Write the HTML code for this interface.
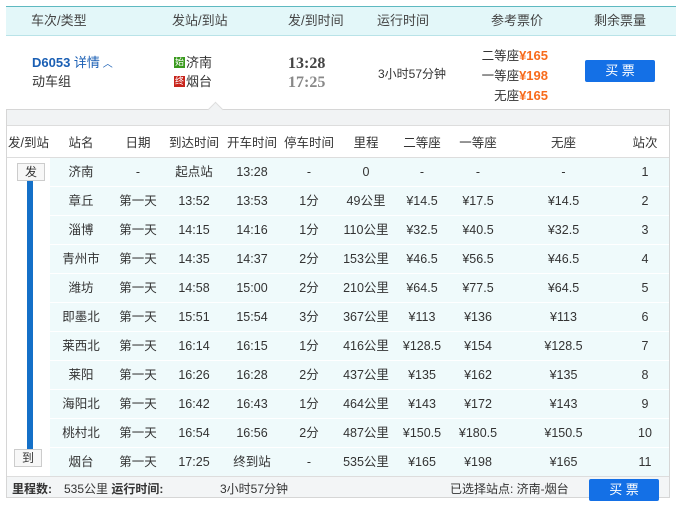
<!DOCTYPE html><html><head><meta charset="utf-8"><style>
*{margin:0;padding:0;box-sizing:border-box}
body{width:676px;height:511px;background:#fff;font-family:"Liberation Sans","Noto Sans CJK SC",sans-serif;font-size:12px;color:#333;position:relative;overflow:hidden}
.a{position:absolute;line-height:16px}
.hd{left:6px;top:6px;width:670px;height:30px;background:#e3f7f9;border-top:1px solid #5fb9c1;border-bottom:1px solid #b9e3e8}
.hd span{position:absolute;top:6px;font-size:13px;color:#444}
.panel{left:6px;top:109px;width:664px;height:389px;border:1px solid #d6d6d6;background:#fff}
.gb{left:7px;top:110px;width:662px;height:16px;background:#f1f3f4;border-bottom:1px solid #ddd}
table{position:absolute;left:7px;top:127px;width:662px;border-collapse:collapse;table-layout:fixed}
td{height:29px;text-align:center;font-size:12.5px;line-height:14px;color:#333;border-top:1px solid #fff;padding:0;vertical-align:middle;white-space:nowrap}
tr.h td{height:30px;background:#fff;border-bottom:1px solid #ddd}
tr.r td{background:#effafb}
tr.r td.f{background:#fff}
.ft{left:7px;top:476px;width:662px;height:21px;background:#f3f5f6;border-top:1px solid #ddd}
.btn{background:#1470e6;color:#fff;border-radius:2px;text-align:center;font-size:13px}
.o{color:#f76b1c;font-weight:bold;font-size:13px}
.tag{width:28px;height:18px;border:1px solid #ccc;background:#f7f7f7;font-size:12px;text-align:center;line-height:16px}
</style></head><body>
<div class="a hd"><span style="left:25px">车次/类型</span><span style="left:166px">发站/到站</span><span style="left:282px">发/到时间</span><span style="left:371px">运行时间</span><span style="left:485px">参考票价</span><span style="left:588px">剩余票量</span></div>
<div class="a" style="left:32px;top:55px;font-weight:bold;color:#1a5fb4;font-size:13px">D6053 <span style="font-weight:normal">详情</span><span style="font-size:10px;font-weight:normal"> ︿</span></div>
<div class="a" style="left:32px;top:74px;font-size:13px">动车组</div>
<div class="a" style="left:174px;top:57px;width:11px;height:11px;background:#3a9a1e;color:#fff;font-size:9px;line-height:11px;text-align:center">始</div>
<div class="a" style="left:186px;top:55px;font-size:13px">济南</div>
<div class="a" style="left:174px;top:76px;width:11px;height:11px;background:#c8241c;color:#fff;font-size:9px;line-height:11px;text-align:center">终</div>
<div class="a" style="left:186px;top:74px;font-size:13px">烟台</div>
<div class="a" style="left:288px;top:55px;font-weight:bold;font-size:16px;color:#444;line-height:18px;font-family:'Liberation Serif',serif">13:28</div>
<div class="a" style="left:288px;top:74px;font-weight:bold;font-size:16px;color:#888;line-height:18px;font-family:'Liberation Serif',serif">17:25</div>
<div class="a" style="left:378px;top:66px;font-size:12px">3小时57分钟</div>
<div class="a" style="left:470px;top:46px;width:78px;text-align:right;line-height:19px;font-size:12.5px">二等座<span class="o">¥165</span><br>一等座<span class="o">¥198</span><br>无座<span class="o">¥165</span></div>
<div class="a btn" style="left:585px;top:60px;width:70px;height:22px;line-height:22px">买 票</div>
<div class="a panel"></div>
<div class="a gb"></div>
<div class="a" style="left:210px;top:104px;width:11px;height:11px;background:#f1f3f4;border-left:1px solid #ddd;border-top:1px solid #ddd;transform:rotate(45deg)"></div>
<table>
<tr class="h"><td style="width:43px">发/到站</td><td style="width:62px">站名</td><td style="width:52px">日期</td><td style="width:60px">到达时间</td><td style="width:56px">开车时间</td><td style="width:58px">停车时间</td><td style="width:56px">里程</td><td style="width:56px">二等座</td><td style="width:56px">一等座</td><td style="width:115px">无座</td><td>站次</td></tr>
<tr class="r"><td class="f"></td><td>济南</td><td>-</td><td>起点站</td><td>13:28</td><td>-</td><td>0</td><td>-</td><td>-</td><td>-</td><td>1</td></tr>
<tr class="r"><td class="f"></td><td>章丘</td><td>第一天</td><td>13:52</td><td>13:53</td><td>1分</td><td>49公里</td><td>¥14.5</td><td>¥17.5</td><td>¥14.5</td><td>2</td></tr>
<tr class="r"><td class="f"></td><td>淄博</td><td>第一天</td><td>14:15</td><td>14:16</td><td>1分</td><td>110公里</td><td>¥32.5</td><td>¥40.5</td><td>¥32.5</td><td>3</td></tr>
<tr class="r"><td class="f"></td><td>青州市</td><td>第一天</td><td>14:35</td><td>14:37</td><td>2分</td><td>153公里</td><td>¥46.5</td><td>¥56.5</td><td>¥46.5</td><td>4</td></tr>
<tr class="r"><td class="f"></td><td>潍坊</td><td>第一天</td><td>14:58</td><td>15:00</td><td>2分</td><td>210公里</td><td>¥64.5</td><td>¥77.5</td><td>¥64.5</td><td>5</td></tr>
<tr class="r"><td class="f"></td><td>即墨北</td><td>第一天</td><td>15:51</td><td>15:54</td><td>3分</td><td>367公里</td><td>¥113</td><td>¥136</td><td>¥113</td><td>6</td></tr>
<tr class="r"><td class="f"></td><td>莱西北</td><td>第一天</td><td>16:14</td><td>16:15</td><td>1分</td><td>416公里</td><td>¥128.5</td><td>¥154</td><td>¥128.5</td><td>7</td></tr>
<tr class="r"><td class="f"></td><td>莱阳</td><td>第一天</td><td>16:26</td><td>16:28</td><td>2分</td><td>437公里</td><td>¥135</td><td>¥162</td><td>¥135</td><td>8</td></tr>
<tr class="r"><td class="f"></td><td>海阳北</td><td>第一天</td><td>16:42</td><td>16:43</td><td>1分</td><td>464公里</td><td>¥143</td><td>¥172</td><td>¥143</td><td>9</td></tr>
<tr class="r"><td class="f"></td><td>桃村北</td><td>第一天</td><td>16:54</td><td>16:56</td><td>2分</td><td>487公里</td><td>¥150.5</td><td>¥180.5</td><td>¥150.5</td><td>10</td></tr>
<tr class="r"><td class="f"></td><td>烟台</td><td>第一天</td><td>17:25</td><td>终到站</td><td>-</td><td>535公里</td><td>¥165</td><td>¥198</td><td>¥165</td><td>11</td></tr>
</table>
<div class="a" style="left:27px;top:180px;width:6px;height:272px;background:#1470c8"></div>
<div class="a tag" style="left:17px;top:163px">发</div>
<div class="a tag" style="left:14px;top:449px">到</div>
<div class="a ft"></div>
<div class="a" style="left:12px;top:481px;font-weight:bold">里程数:</div>
<div class="a" style="left:64px;top:481px">535公里 <b>运行时间:</b></div>
<div class="a" style="left:220px;top:481px">3小时57分钟</div>
<div class="a" style="left:450px;top:481px">已选择站点: 济南-烟台</div>
<div class="a btn" style="left:589px;top:479px;width:70px;height:22px;line-height:22px">买 票</div>
</body></html>
